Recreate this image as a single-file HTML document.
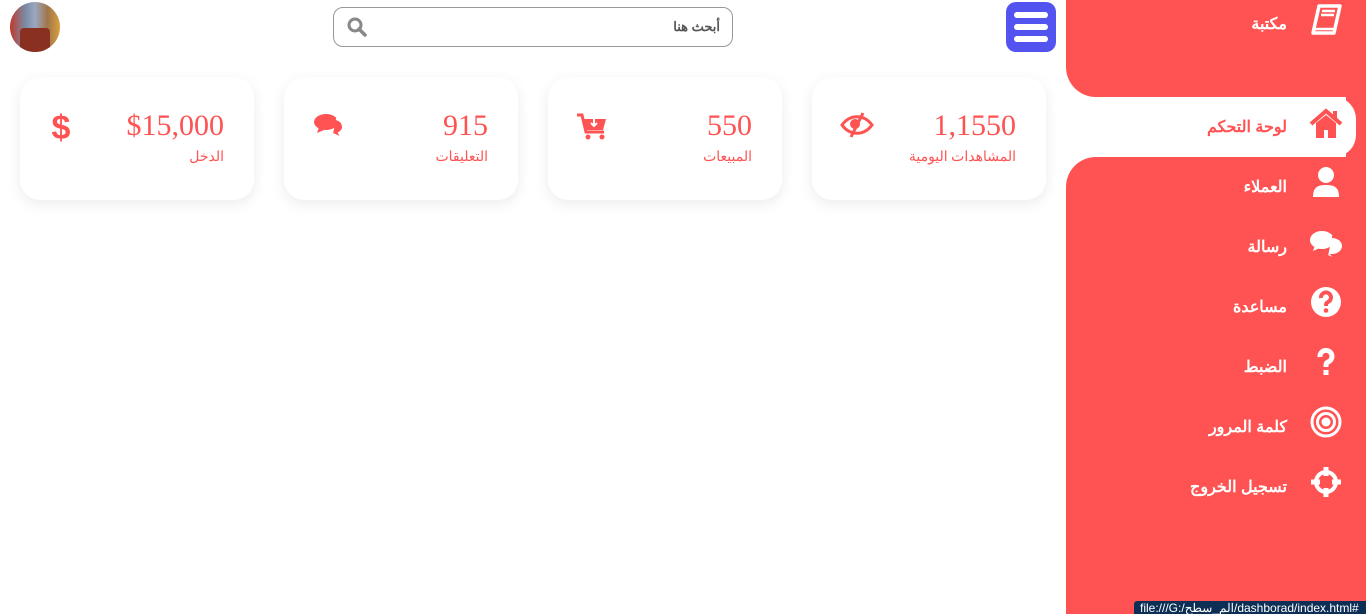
<!DOCTYPE html>
<html dir="ltr"><head><meta charset="utf-8"><style>
*{margin:0;padding:0;box-sizing:border-box}
body{width:1366px;height:614px;overflow:hidden;background:#fff;font-family:"Liberation Sans","Noto Sans CJK SC",sans-serif;position:relative}
#side{position:absolute;left:1066px;top:0;width:300px;height:614px;background:#fff}
#strip{position:absolute;left:280px;top:0;width:20px;height:614px;background:#ff5252}
#topb{position:absolute;left:0;top:0;width:300px;height:97px;background:#ff5252;border-bottom-left-radius:30px}
#botb{position:absolute;left:0;top:157px;width:300px;height:457px;background:#ff5252;border-top-left-radius:30px}
#act{position:absolute;left:0;top:97px;width:290px;height:60px;background:#fff;border-radius:0 22px 22px 0}
.it{position:absolute;right:79px;font-weight:bold;font-size:16px;color:#fff;direction:rtl;white-space:nowrap}
.ic{position:absolute;left:242px;width:36px;height:36px}
.card{position:absolute;top:77px;width:234px;height:123px;background:#fff;border-radius:20px;box-shadow:0 4px 14px rgba(0,0,0,.08)}
.num{position:absolute;right:30px;top:32px;font-family:"Liberation Serif",serif;font-size:30px;color:#ff5252}
.lab{position:absolute;right:30px;top:72px;font-family:"Liberation Serif","Noto Sans CJK SC",serif;font-size:14px;color:#ff5252;direction:rtl}
.ci{position:absolute;left:28px;top:32px;width:34px;height:34px}
</style></head><body>
<div id="side">
<div id="strip"></div><div id="topb"></div><div id="botb"></div><div id="act"></div>
<div class="it" style="top:14px">مكتبة</div>
<svg class="ic" style="top:3px" viewBox="0 0 36 36"><path d="M11 3h21l-6 27H5z" fill="none" stroke="#fff" stroke-width="3.5" stroke-linejoin="round"/><path d="M14 8h13M13 12h13" stroke="#fff" stroke-width="2.5"/><path d="M5 30c0-3 2-4 4-4h18" fill="none" stroke="#fff" stroke-width="2.5"/></svg>
<div class="it" style="top:117px;color:#ff5252">لوحة التحكم</div>
<svg class="ic" style="top:106px" viewBox="0 0 36 36"><path d="M3 18L18 5l15 13" fill="none" stroke="#ff5252" stroke-width="4"/><path d="M8 17v15h8v-8h4v8h8V17L18 9z" fill="#ff5252"/><rect x="25" y="5" width="4" height="8" fill="#ff5252"/></svg>
<div class="it" style="top:177px">العملاء</div>
<svg class="ic" style="top:164px" viewBox="0 0 36 36"><circle cx="18" cy="11" r="8" fill="#fff"/><path d="M5 33c0-10 5-12 13-12s13 2 13 12z" fill="#fff"/></svg>
<div class="it" style="top:237px">رسالة</div>
<svg class="ic" style="top:226px" viewBox="0 0 36 36"><ellipse cx="14" cy="14" rx="12" ry="9" fill="#fff"/><path d="M5 25l2-6 5 3z" fill="#fff"/><path d="M24 11a11 9 0 0 1 0 18l5 5-9-4" fill="#fff" stroke="#ff5252" stroke-width="2"/></svg>
<div class="it" style="top:297px">مساعدة</div>
<svg class="ic" style="top:284px" viewBox="0 0 36 36"><circle cx="18" cy="18" r="15" fill="#fff"/><path d="M13 14a5 5 0 1 1 7 4c-2 1-2 2-2 4" fill="none" stroke="#ff5252" stroke-width="4"/><circle cx="18" cy="26.5" r="2.3" fill="#ff5252"/></svg>
<div class="it" style="top:357px">الضبط</div>
<svg class="ic" style="top:345px" viewBox="0 0 36 36"><path d="M12 12a6 6 0 1 1 8 5c-2 1-2 2-2 5" fill="none" stroke="#fff" stroke-width="5"/><rect x="15.5" y="25" width="5" height="5" fill="#fff"/></svg>
<div class="it" style="top:417px">كلمة المرور</div>
<svg class="ic" style="top:404px" viewBox="0 0 36 36"><circle cx="18" cy="18" r="14" fill="none" stroke="#fff" stroke-width="3"/><circle cx="18" cy="18" r="8.5" fill="none" stroke="#fff" stroke-width="3"/><circle cx="18" cy="18" r="4.5" fill="#fff"/></svg>
<div class="it" style="top:477px">تسجيل الخروج</div>
<svg class="ic" style="top:464px" viewBox="0 0 36 36"><circle cx="18" cy="18" r="10" fill="none" stroke="#fff" stroke-width="4"/><path d="M18 3v9M18 24v9M3 18h9M24 18h9" stroke="#fff" stroke-width="5"/></svg>
<div style="position:absolute;left:68px;top:601px;width:232px;height:13px;background:#0d2f55;border-radius:3px 0 0 0;color:#fff;font-size:12px;line-height:15px;padding-left:6px;white-space:nowrap;overflow:hidden">file:///G:/الم_سطح/dashborad/index.html#</div>
</div>
<div style="position:absolute;left:10px;top:2px;width:50px;height:50px;border-radius:50%;background:linear-gradient(90deg,#c0392b 0,#7a8aa5 30%,#9aa8c0 50%,#a0764a 75%,#d8a040 100%);overflow:hidden"><div style="position:absolute;left:10px;top:26px;width:30px;height:24px;background:#8a3020;border-radius:4px"></div></div>
<div style="position:absolute;left:1006px;top:2px;width:50px;height:50px;border-radius:10px;background:#5353f0"><div style="position:absolute;left:8px;top:10px;width:34px;height:6px;background:#fff;border-radius:3px"></div><div style="position:absolute;left:8px;top:22px;width:34px;height:6px;background:#fff;border-radius:3px"></div><div style="position:absolute;left:8px;top:34px;width:34px;height:6px;background:#fff;border-radius:3px"></div></div>
<div style="position:absolute;left:333px;top:7px;width:400px;height:40px;border:1px solid #999;border-radius:10px"><div style="position:absolute;right:12px;top:11px;font-size:13px;color:#555;direction:rtl;font-weight:bold">أبحث هنا</div>
<svg style="position:absolute;left:12px;top:8px" width="22" height="22" viewBox="0 0 22 22"><circle cx="9" cy="9" r="6" fill="none" stroke="#888" stroke-width="3"/><path d="M13 13l6 6" stroke="#888" stroke-width="3.5" stroke-linecap="round"/></svg></div>
<div class="card" style="left:20px"><div class="num">$15,000</div><div class="lab">الدخل</div><svg class="ci" style="left:24px" viewBox="0 0 34 34"><text x="17" y="30" text-anchor="middle" font-family="Liberation Sans Narrow, Liberation Sans" font-weight="bold" font-size="34" fill="#ff5252">$</text></svg></div>
<div class="card" style="left:284px"><div class="num">915</div><div class="lab">التعليقات</div><svg class="ci" viewBox="0 0 34 34"><ellipse cx="14" cy="13" rx="12" ry="8" fill="#ff5252"/><path d="M5 24l2-6 5 3z" fill="#ff5252"/><path d="M24 10a10 8 0 0 1 3 14l3 5-9-4" fill="#ff5252" stroke="#fff" stroke-width="2"/></svg></div>
<div class="card" style="left:548px"><div class="num">550</div><div class="lab">المبيعات</div><svg class="ci" viewBox="0 0 34 34"><path d="M1 6h5l4 17h18" fill="none" stroke="#ff5252" stroke-width="3"/><path d="M8 10h22l-3 11H11z" fill="#ff5252"/><circle cx="12" cy="28" r="2.5" fill="#ff5252"/><circle cx="26" cy="28" r="2.5" fill="#ff5252"/><path d="M18 10v7M15 14l3 3 3-3" stroke="#fff" stroke-width="2" fill="none"/></svg></div>
<div class="card" style="left:812px"><div class="num">1,1550</div><div class="lab">المشاهدات اليومية</div><svg class="ci" viewBox="0 0 34 34"><path d="M2 16c8-11 22-11 30 0-8 11-22 11-30 0z" fill="none" stroke="#ff5252" stroke-width="3"/><circle cx="15" cy="15" r="5" fill="#ff5252"/><path d="M23 4L11 28" stroke="#ff5252" stroke-width="3"/></svg></div>
</body></html>
